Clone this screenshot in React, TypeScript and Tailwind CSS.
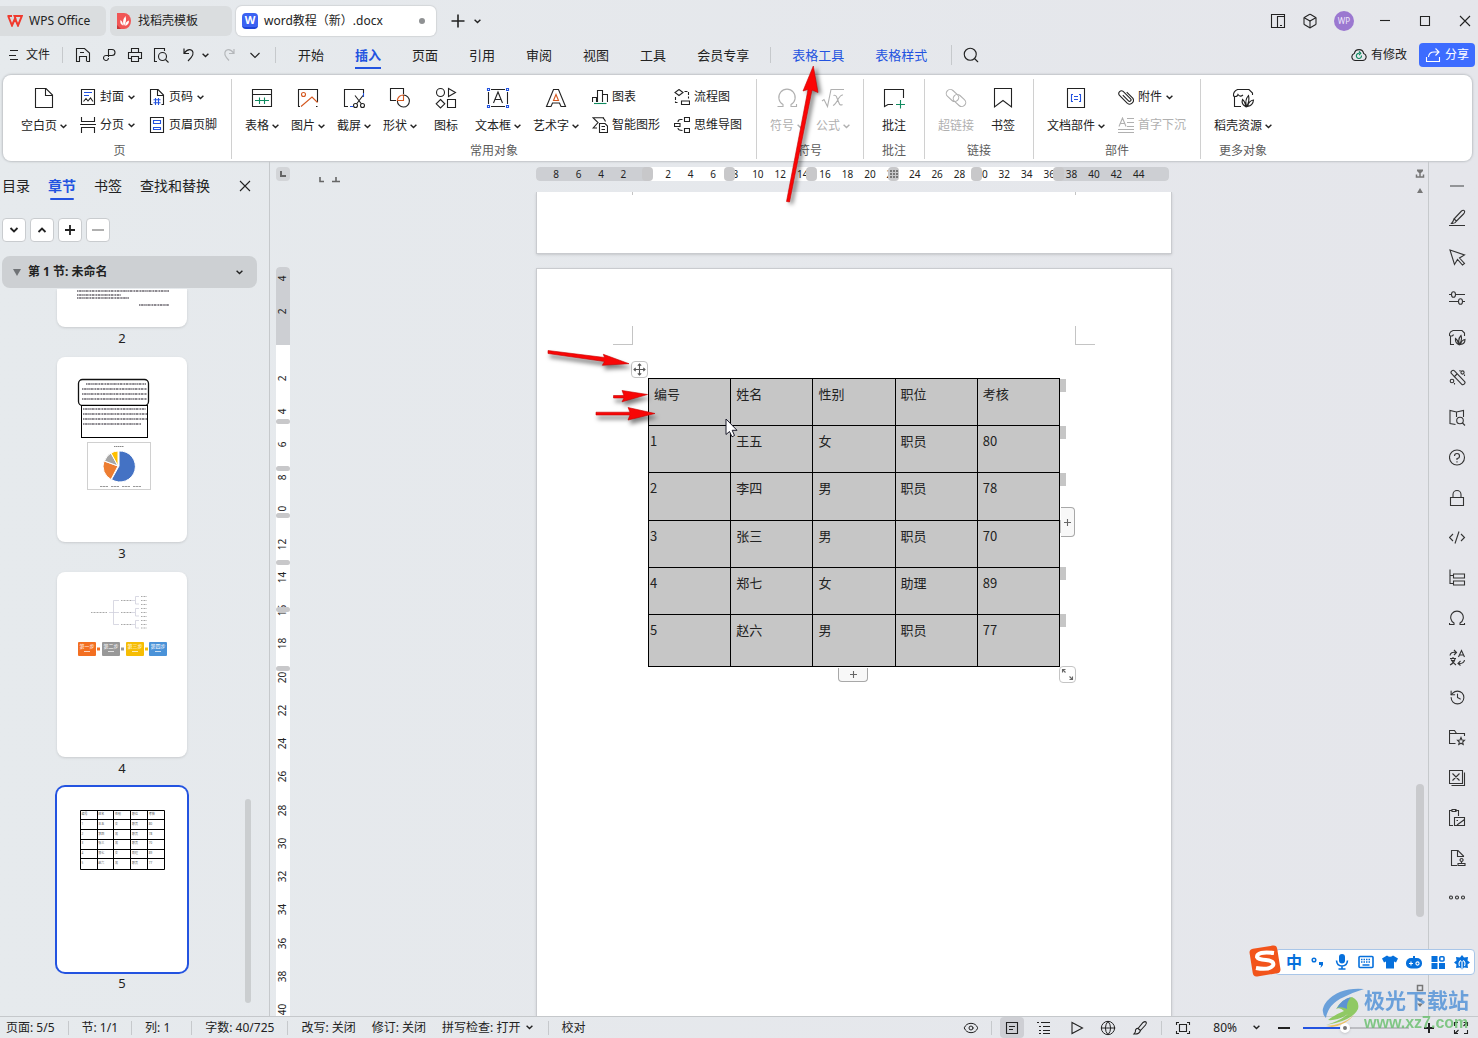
import { ReactNode } from "react";
import { Box, Eye, Globe, History, Search } from "lucide-react";

interface IconProps {
  size?: number;
  className?: string;
  children: ReactNode;
}

function Icon({ size = 16, className = "", children }: IconProps) {
  return (
    <svg
      width={size}
      height={size}
      viewBox={`0 0 ${size} ${size}`}
      fill="none"
      stroke="currentColor"
      strokeWidth={1.1}
      className={`shrink-0 ${className}`}
      aria-hidden="true"
    >
      {children}
    </svg>
  );
}

function Chevron({ className = "" }: { className?: string }) {
  return (
    <svg width="7" height="5" viewBox="0 0 7 5" fill="none" stroke="currentColor" strokeWidth="1.4" className={`shrink-0 ${className}`} aria-hidden="true">
      <path d="M0.6 0.8 3.5 3.6 6.4 0.8" />
    </svg>
  );
}

const BLUE = "#2353e0";
const ORANGE = "#d4571e";
const GREEN = "#0f8a5f";

/* ---------- ribbon icons ---------- */

const bigIcons: Record<string, ReactNode> = {
  blank: <path d="M3.5 2.5H14L20.5 9V21.5H3.5ZM13.5 2.5V9.5H20.5" />,
  table: (
    <>
      <path d="M2.5 3.5H21.5V20.5H2.5ZM2.5 8.5H21.5" />
      <path d="M5 14.5H19M9.5 11.5V18M14.5 11.5V18" stroke={GREEN} />
    </>
  ),
  picture: (
    <>
      <path d="M21.5 16V3.5H2.5V20.5H4M21.5 20.5H20" />
      <circle cx="7.5" cy="8.5" r="2" stroke={ORANGE} />
      <path d="M5 20.5 16 11 21.5 16.5" stroke={ORANGE} />
    </>
  ),
  capture: (
    <>
      <path d="M6 20.5H2.5V3.5H21.5V7" />
      <path d="M21.5 7V11M8 20.5H11" stroke={BLUE} />
      <path d="M13 9.5 19.5 18M21 9.5 14.5 18" />
      <circle cx="13.5" cy="19.5" r="2" />
      <circle cx="20.5" cy="19.5" r="2" />
    </>
  ),
  shape: (
    <>
      <path d="M8 14.5H2.5V2.5H15.5V8" />
      <path d="M9.3 14.5A6 6 0 0 1 15.5 9V14.5Z" stroke={ORANGE} />
      <path d="M15.5 9A6 6 0 1 1 9.4 15" />
    </>
  ),
  glyphs: (
    <>
      <circle cx="6.5" cy="6.5" r="4" />
      <path d="M14.5 2.5 21.5 6.5 14.5 10.5Z" />
      <path d="M6.5 13.5 10.8 17.8 6.5 22 2.2 17.8Z" />
      <path d="M13.5 13.5H21.5V21.5H13.5Z" />
    </>
  ),
  textbox: (
    <>
      <path d="M5 3.5H19M5 20.5H19M2.5 6V18M21.5 6V18M7.5 17 12 6 16.5 17M9 13.5H15" />
      <path d="M1.5 2.5H3.5V4.5H1.5ZM20.5 2.5H22.5V4.5H20.5ZM1.5 19.5H3.5V21.5H1.5ZM20.5 19.5H22.5V21.5H20.5Z" stroke={BLUE} />
    </>
  ),
  wordart: (
    <>
      <path d="M9.5 3.5H14.5L21.5 20.5H17L15.5 17H8.5L7 20.5H2.5Z" />
      <path d="M12 8.5 14.5 14.5H9.5Z" stroke={ORANGE} />
    </>
  ),
  omega: <path d="M2.5 20.5H8V18.5A8.2 8.2 0 1 1 16 18.5V20.5H21.5V18" />,
  formula: (
    <>
      <path d="M1 15 3 13.5 6.5 20.5 10 3.5H23" />
      <path d="M12.5 9.5Q15 8.5 16 12L18 17Q19 20 21.5 18.5M22 9Q20 8.5 17.5 12.5Q14.5 18.5 12 19.5" />
    </>
  ),
  comment: (
    <>
      <path d="M21.5 12V3.5H2.5V20.5L6 18.5H11" />
      <path d="M18.5 14V22.5M14 18.5H23" stroke={GREEN} />
    </>
  ),
  link: (
    <>
      <rect x="1.5" y="5.5" width="14" height="8" rx="4" transform="rotate(42 8.5 9.5)" />
      <rect x="8.5" y="10.5" width="14" height="8" rx="4" transform="rotate(42 15.5 14.5)" />
    </>
  ),
  bookmark: <path d="M3.5 21V2.5H20.5V21L12 14.5Z" />,
  parts: (
    <>
      <path d="M3.5 2.5H20.5V21.5H3.5Z" />
      <path d="M9 8.5H7.5V15.5H9M15 8.5H16.5V15.5H15M10 10.5H14M10 13.5H14" stroke={BLUE} />
    </>
  ),
  docer: (
    <>
      <path d="M6.5 3.5H18L21.5 7V9M6.5 3.5Q2 5.5 2.5 10Q6 11.5 7 8.5Q9 11.5 12 9M3.5 11V20.5H10" />
      <path d="M15.5 20.5Q13.5 14 17.5 9.5Q19 15 15.5 20.5ZM14.5 20.5Q10 18 11.5 13.5Q14.5 16 14.5 20.5ZM16.5 20.5Q18 14.5 22.5 14Q22 19.5 16.5 20.5Z" />
    </>
  ),
};

const smallIcons: Record<string, ReactNode> = {
  cover: (
    <>
      <path d="M1.5 0.5H14.5V15.5H1.5Z" />
      <path d="M4 3.5H12M4 6.5H9" stroke={BLUE} />
      <path d="M3.5 12.5 6 9.5 8 12 10.5 9 13 12.5" />
    </>
  ),
  pageBreak: <path d="M1.5 0V4.5H14.5V0M0 7.5H16M1.5 16V10.5H14.5V16" />,
  pageNumber: (
    <>
      <path d="M3.5 15.5H1.5V0.5H9L14.5 6V15.5H12.5M8.5 0.5V6.5H14.5" />
      <path d="M6.5 9V16M9.5 9V16M4.5 10.8H11.5M4.5 13.8H11.5" stroke={BLUE} />
    </>
  ),
  headerFooter: (
    <>
      <path d="M1.5 0.5H14.5V15.5H1.5Z" />
      <path d="M4.5 3.5H11.5V6.5H4.5ZM4.5 10.5H11.5V12.5H4.5Z" stroke={BLUE} />
    </>
  ),
  chart: (
    <>
      <path d="M0.5 13V8.5H4.5V13M5.5 13V1.5H10.5V13M10.5 5.5H15.5V13" />
      <path d="M2 14.5H14.5" stroke={GREEN} />
    </>
  ),
  smart: (
    <>
      <path d="M11.5 2V0.8H1.2L6 5.5 1.2 11H5M11 1Q12.5 2 13.5 4.5" />
      <path d="M7.5 6.5H13L15.5 9V15.5H7.5ZM9.5 9.5H13M9.5 12.5H13" />
    </>
  ),
  flow: (
    <>
      <path d="M5 0.5 9 3.5 5 6.5 1 3.5ZM7.5 12H15.5V15.5H7.5Z" />
      <path d="M10.5 2.5H14.5V9.5M1.5 8V13.5H5" strokeDasharray="3 1.5" />
    </>
  ),
  mind: (
    <>
      <path d="M0.5 6.5H6V9.5H0.5ZM10.5 0.5H15.5V4.5H10.5ZM10.5 11.5H15.5V15.5H10.5Z" />
      <path d="M8.5 2.5H6.5Q4 2.5 4 5M4 11Q4 13.5 8.5 13.5" />
    </>
  ),
  clip: (
    <path d="M4.5 9H12.5A1.4 1.4 0 0 0 12.500 6H2A2.800 2.800 0 0 0 2 11.500H13.500A3.800 3.800 0 0 0 13.500 4H5" transform="rotate(45 8 8)" />
  ),
  dropCap: <path d="M1 9.5 4.5 1 8 9.5M2.5 6.5H6.5M9 1.5H16M9 5.5H16M9 9.5H16M0 12.5H16M0 15.5H16" />,
};

interface RibbonButtonProps {
  icon: string;
  label: string;
  width: string;
  menu?: boolean;
  disabled?: boolean;
}

function BigButton({ icon, label, width, menu, disabled }: RibbonButtonProps) {
  return (
    <button type="button" disabled={disabled} className={`flex flex-col items-center gap-2 pt-[7px] ${width} ${disabled ? "text-[#b0b0b0]" : "text-[#222]"}`}>
      <Icon size={24}>{bigIcons[icon]}</Icon>
      <span className="flex items-center gap-[3px] whitespace-nowrap leading-4">
        {label}
        {menu && <Chevron />}
      </span>
    </button>
  );
}

function SmallButton({ icon, label, menu, disabled }: Omit<RibbonButtonProps, "width">) {
  return (
    <button type="button" disabled={disabled} className={`flex items-center gap-1 whitespace-nowrap leading-4 ${disabled ? "text-[#b0b0b0]" : "text-[#222]"}`}>
      <Icon>{smallIcons[icon]}</Icon>
      {label}
      {menu && <Chevron />}
    </button>
  );
}

function SmallColumn({ children }: { children: ReactNode }) {
  return <div className="mx-[7px] flex flex-col items-start gap-3 pt-[10px]">{children}</div>;
}

function RibbonGroup({ caption, children }: { caption: string; children: ReactNode }) {
  return (
    <div className="flex flex-col items-center justify-between border-l border-[#d0d0d0] px-[7px] first:border-l-0">
      <div className="flex">{children}</div>
      <span className="leading-4 text-[#5c5c5c]">{caption}</span>
    </div>
  );
}

function Ribbon() {
  return (
    <div className="ml-[3px] mr-[6px] flex h-[86px] shrink-0 rounded-lg bg-white pb-[2px] pl-[5px] pt-1 text-xs shadow-[0_0_2px_1px_#bfc3c7]">
      <RibbonGroup caption="页">
        <BigButton icon="blank" label="空白页" width="w-[58px]" menu />
        <SmallColumn>
          <SmallButton icon="cover" label="封面" menu />
          <SmallButton icon="pageBreak" label="分页" menu />
        </SmallColumn>
        <SmallColumn>
          <SmallButton icon="pageNumber" label="页码" menu />
          <SmallButton icon="headerFooter" label="页眉页脚" />
        </SmallColumn>
      </RibbonGroup>
      <RibbonGroup caption="常用对象">
        <BigButton icon="table" label="表格" width="w-[46px]" menu />
        <BigButton icon="picture" label="图片" width="w-[46px]" menu />
        <BigButton icon="capture" label="截屏" width="w-[46px]" menu />
        <BigButton icon="shape" label="形状" width="w-[46px]" menu />
        <BigButton icon="glyphs" label="图标" width="w-[46px]" />
        <BigButton icon="textbox" label="文本框" width="w-[58px]" menu />
        <BigButton icon="wordart" label="艺术字" width="w-[58px]" menu />
        <SmallColumn>
          <SmallButton icon="chart" label="图表" />
          <SmallButton icon="smart" label="智能图形" />
        </SmallColumn>
        <SmallColumn>
          <SmallButton icon="flow" label="流程图" />
          <SmallButton icon="mind" label="思维导图" />
        </SmallColumn>
      </RibbonGroup>
      <RibbonGroup caption="符号">
        <BigButton icon="omega" label="符号" width="w-[46px]" menu disabled />
        <BigButton icon="formula" label="公式" width="w-[46px]" menu disabled />
      </RibbonGroup>
      <RibbonGroup caption="批注">
        <BigButton icon="comment" label="批注" width="w-[46px]" />
      </RibbonGroup>
      <RibbonGroup caption="链接">
        <BigButton icon="link" label="超链接" width="w-[48px]" disabled />
        <BigButton icon="bookmark" label="书签" width="w-[46px]" />
      </RibbonGroup>
      <RibbonGroup caption="部件">
        <BigButton icon="parts" label="文档部件" width="w-[70px]" menu />
        <SmallColumn>
          <SmallButton icon="clip" label="附件" menu />
          <SmallButton icon="dropCap" label="首字下沉" disabled />
        </SmallColumn>
      </RibbonGroup>
      <RibbonGroup caption="更多对象">
        <BigButton icon="docer" label="稻壳资源" width="w-[70px]" menu />
      </RibbonGroup>
    </div>
  );
}

/* ---------- title bar and menu ---------- */

function TitleBar() {
  return (
    <header className="flex h-10 shrink-0 items-center pt-[2px] text-xs">
      <button type="button" className="flex h-[30px] w-[106px] items-center gap-[6px] rounded-r-md bg-[#dadddf] pl-[7px]">
        <svg width="16" height="12" viewBox="0 0 16 12" fill="none" stroke="#f03a2e" strokeWidth="2" aria-hidden="true">
          <path d="M0.5 1H5M1.2 1 5 10.5 8 3.5 11 10.5 14.8 1H7.5L9 5" />
        </svg>
        WPS Office
      </button>
      <button type="button" className="ml-1 flex h-[30px] w-[122px] items-center gap-[7px] rounded-md bg-[#dadddf] pl-[7px]">
        <svg width="14" height="16" viewBox="0 0 14 16" aria-hidden="true">
          <path d="M0 0H7A7 8 0 0 1 7 16H0Z" fill="#f15656" />
          <path d="M0 12 4 16H0Z" fill="#c93636" />
          <path d="M7 13Q4.5 8 8.5 3Q10 8 7 13ZM6 12.5Q2.5 11 3.5 7Q6 8.5 6 12.5ZM8 12.8Q8.5 8.5 12 7.5Q12 12 8 12.8Z" fill="#fff" />
        </svg>
        找稻壳模板
      </button>
      <button type="button" className="ml-1 flex h-[30px] w-[200px] items-center gap-[6px] rounded-md bg-white pl-[6px] pr-[11px] shadow-[0_0_1px_1px_#d3d6d9]">
        <span className="flex h-4 w-4 items-center justify-center rounded-sm border-b-2 border-[#1f45d8] bg-[#3b62f2] text-[11px] font-bold leading-3 text-white">W</span>
        <span>word教程（新）.docx</span>
        <span className="ml-auto h-[6px] w-[6px] rounded-full bg-[#8f9193]" />
      </button>
      <button type="button" aria-label="新建" className="ml-[14px] flex items-center">
        <Icon size={16}>
          <path d="M8 1.5V14.5M1.5 8H14.5" strokeWidth="1.6" />
        </Icon>
      </button>
      <button type="button" aria-label="标签列表" className="ml-2">
        <Chevron />
      </button>
      <div className="ml-auto flex items-center gap-4 pr-[7px]">
        <button type="button" aria-label="窗口">
          <Icon>
            <path d="M7 14.5H1.5V1.5H14.5V3M7.5 3.5H14.5V14.5H7.5ZM10 12.5H12" />
          </Icon>
        </button>
        <button type="button" aria-label="应用">
          <Box size={16} strokeWidth={1.6} />
        </button>
        <span className="flex h-5 w-5 items-center justify-center rounded-full bg-[#9b78d0] text-[8px] leading-none text-[#efe8fa]">WP</span>
        <div className="ml-[9px] flex items-center gap-7">
          <button type="button" aria-label="最小化">
            <Icon size={12}>
              <path d="M1 5.5H11" />
            </Icon>
          </button>
          <button type="button" aria-label="最大化">
            <Icon size={12}>
              <path d="M1.5 1.5H10.5V10.5H1.5Z" />
            </Icon>
          </button>
          <button type="button" aria-label="关闭">
            <Icon size={12}>
              <path d="M1 1 11 11M11 1 1 11" />
            </Icon>
          </button>
        </div>
      </div>
    </header>
  );
}

const menuTabs = ["开始", "插入", "页面", "引用", "审阅", "视图", "工具", "会员专享"];

function MenuBar() {
  return (
    <nav className="flex h-[35px] shrink-0 items-center pb-[5px] text-xs">
      <button type="button" className="flex items-center gap-[7px] pl-[9px]">
        <Icon size={10}>
          <path d="M1 0.5H9M0 5.5H7M1 9.5H9" />
        </Icon>
        文件
      </button>
      <span className="ml-3 h-4 w-px bg-[#c6c9cc]" />
      <div className="ml-3 flex items-center gap-[10px]">
        <button type="button" aria-label="保存">
          <Icon>
            <path d="M5 14.5H1.5V1.5H9.5L14.5 6V14.5H12M4.5 14.5V9.5H11.5V14.5M5 5.5H9" />
          </Icon>
        </button>
        <button type="button" aria-label="输出">
          <Icon>
            <path d="M7.5 10V2.500H11A2.800 2.800 0 0 1 11 8.500H5.500A2.500 2.500 0 1 0 7.500 11" />
          </Icon>
        </button>
        <button type="button" aria-label="打印">
          <Icon>
            <path d="M4.5 5V1.5H11.5V5M4 11.5H1.5V5.5H14.5V11.5H12M4.5 9.5H11.5V14.5H4.5Z" />
          </Icon>
        </button>
        <button type="button" aria-label="打印预览">
          <Icon>
            <path d="M4 14.5H1.5V1.5H11.5V4" />
            <circle cx="9.5" cy="9.5" r="4" />
            <path d="M12.5 12.5 15.5 15.5" />
          </Icon>
        </button>
        <button type="button" aria-label="撤销" className="flex items-center gap-[5px] pl-[2px]">
          <Icon>
            <path d="M3 1.5V6.5H8M3 6.5Q7 1 11 3.5Q14.5 7 7 14" strokeWidth="1.2" />
          </Icon>
          <Chevron />
        </button>
        <button type="button" aria-label="恢复" disabled className="pl-[2px] text-[#b5b8bb]">
          <Icon>
            <path d="M13 2V6.5H8M13 6.5Q9 1 5 3.5Q1.5 7 8 13.5" strokeWidth="1.2" />
          </Icon>
        </button>
        <button type="button" aria-label="更多命令">
          <Icon>
            <path d="M3.5 6 8 10.5 12.5 6" />
          </Icon>
        </button>
      </div>
      <span className="ml-3 h-4 w-px bg-[#c6c9cc]" />
      <div className="ml-[22px] flex items-center gap-[31px] text-[13px] leading-5">
        {menuTabs.map((tab) => (
          <a key={tab} href="#" className={tab === "插入" ? "relative font-bold text-[#2353e0] after:absolute after:-bottom-1 after:left-0 after:h-[2px] after:w-full after:bg-[#2353e0]" : ""}>
            {tab}
          </a>
        ))}
      </div>
      <span className="ml-[21px] h-4 w-px bg-[#c6c9cc]" />
      <div className="ml-[21px] flex items-center gap-[31px] text-[13px] leading-5 text-[#2353e0]">
        <a href="#">表格工具</a>
        <a href="#">表格样式</a>
      </div>
      <span className="ml-6 h-5 w-px bg-[#c6c9cc]" />
      <button type="button" aria-label="搜索" className="ml-[10px]">
        <Search size={18} strokeWidth={1.5} />
      </button>
      <div className="ml-auto flex items-center pr-[3px]">
        <button type="button" className="flex items-center gap-1">
          <Icon>
            <path d="M4.5 13.5A3.6 3.6 0 0 1 3.3 6.5A4.8 4.8 0 0 1 12.7 6.5A3.6 3.6 0 0 1 11.5 13.5Z" />
            <path d="M10.5 8.5A2.6 2.6 0 1 1 8.5 6.3M8 4.5 9.8 6.3 8 8" stroke={GREEN} />
          </Icon>
          有修改
        </button>
        <button type="button" className="ml-3 flex h-6 w-14 items-center justify-center gap-1 rounded bg-[#3d6cff] text-white">
          <Icon>
            <path d="M10.5 1.5 14 5 10.5 8.5M14 5H9Q4 5 3.5 10M1.5 10V14.5H14.5V10" />
          </Icon>
          分享
        </button>
      </div>
    </nav>
  );
}

/* ---------- section pane ---------- */

function TextLines({ x, y, widths, gap }: { x: number; y: number; widths: number[]; gap: number }) {
  return (
    <g stroke="#8d8a90" strokeWidth="1.8" strokeDasharray="1.5 0.6 2.5 0.5 0.8 0.4">
      {widths.map((w, i) => (
        <path key={i} d={`M${x} ${y + i * gap}h${w}`} />
      ))}
    </g>
  );
}

function PageTwoThumb() {
  return (
    <svg width="130" height="38" viewBox="0 0 130 38" aria-hidden="true">
      <TextLines x={20} y={2} widths={[92]} gap={4} />
      <TextLines x={20} y={6} widths={[44]} gap={4} />
      <TextLines x={20} y={9} widths={[52]} gap={4} />
      <TextLines x={82} y={16} widths={[30]} gap={4} />
    </svg>
  );
}

function PageThreeThumb() {
  return (
    <svg width="130" height="185" viewBox="0 0 130 185" aria-hidden="true">
      <rect x="21.5" y="22.5" width="70" height="26" rx="4" fill="none" stroke="#111" strokeWidth="1.3" />
      <TextLines x={29} y={27} widths={[60]} gap={5} />
      <TextLines x={25} y={32} widths={[65, 65, 65]} gap={5} />
      <rect x="24.5" y="48.5" width="66" height="32" fill="#fff" stroke="#000" />
      <TextLines x={26} y={52} widths={[63, 64, 64, 58]} gap={5} />
      <rect x="30.5" y="85.5" width="63" height="47" fill="#fff" stroke="#d0d0d0" />
      <path d="M57 89.5H67" stroke="#888" strokeDasharray="1.5 0.5" />
      <g stroke="#fff" strokeWidth="1">
        <path d="M62 109V94A15.5 15.5 0 1 1 54.5 122.5Z" fill="#4472c4" />
        <path d="M61 109 54 122.5A15 15 0 0 1 47 104Z" fill="#ed7d31" />
        <path d="M61 109 47.5 104A15 15 0 0 1 54 96Z" fill="#a5a5a5" />
        <path d="M61 109 54 96A15 15 0 0 1 61 94Z" fill="#ffc000" />
      </g>
      <path d="M43 129.5H84" stroke="#999" strokeDasharray="2 0.5 3 0.5 2 3" />
    </svg>
  );
}

const steps = [
  { x: 21, label: "第一步", fill: "#f36f21" },
  { x: 45, label: "第二步", fill: "#989898" },
  { x: 69, label: "第三步", fill: "#f6bd04" },
  { x: 92, label: "第四步", fill: "#4a92d8" },
];

function PageFourThumb() {
  return (
    <svg width="130" height="185" viewBox="0 0 130 185" aria-hidden="true">
      <g fill="none" stroke="#cfcfdc" strokeWidth="0.8">
        <path d="M52 40.5H62M62 28.5H56.5V52.5H62M74 28.5H78M74 40.5H78M74 52.5H78" />
        <path d="M82 24.5H78.5V32H82M82 36.5H78.5V44H82M82 48.5H78.5V56H82" />
      </g>
      <g stroke="#a8a8a8" strokeWidth="1.2" strokeDasharray="1 0.5">
        <path d="M34 40.5H50M64 28.5H74M64 40.5H74M64 52.5H74" />
        {[24.5, 28.5, 32.5, 36.5, 40.5, 44.5, 48.5, 52.5, 56].map((y) => (
          <path key={y} d={`M84 ${y}H90`} />
        ))}
      </g>
      <path d="M40 77H43" stroke="#f36f21" strokeWidth="3" />
      <path d="M64 77H67" stroke="#989898" strokeWidth="3" />
      <path d="M88 77H91" stroke="#f6bd04" strokeWidth="3" />
      {steps.map((s) => (
        <g key={s.label}>
          <rect x={s.x} y="70" width="18" height="14" rx="1" fill={s.fill} />
          <text x={s.x + 9} y="76" textAnchor="middle" fontSize="5" fill="#fff">
            {s.label}
          </text>
          <path d={`M${s.x + 6} 79.5h6`} stroke="#fff" strokeOpacity="0.7" />
        </g>
      ))}
    </svg>
  );
}

const rows = [
  ["编号", "姓名", "性别", "职位", "考核"],
  ["1", "王五", "女", "职员", "80"],
  ["2", "李四", "男", "职员", "78"],
  ["3", "张三", "男", "职员", "70"],
  ["4", "郑七", "女", "助理", "89"],
  ["5", "赵六", "男", "职员", "77"],
];

function PageFiveThumb() {
  return (
    <svg width="130" height="185" viewBox="0 0 130 185" aria-hidden="true">
      <path
        d="M23.5 23.5H107.5V82.5H23.5ZM40.5 23.5V82.5M56.5 23.5V82.5M73.5 23.5V82.5M90.5 23.5V82.5M23.5 32.5H107.5M23.5 42.5H107.5M23.5 52.5H107.5M23.5 62.5H107.5M23.5 71.5H107.5"
        fill="none"
        stroke="#000"
      />
      {rows.map((row, r) =>
        row.map((cell, c) => (
          <text key={`${r}-${c}`} x={24.5 + c * 16.8} y={28 + r * 9.8} fontSize="3" fill="#555">
            {cell}
          </text>
        )),
      )}
    </svg>
  );
}

const paneTabs = ["目录", "章节", "书签", "查找和替换"];

const paneButtons = [
  { label: "下一节", path: "M3.5 5 7 8.5 10.5 5", off: false },
  { label: "上一节", path: "M3.5 9 7 5.5 10.5 9", off: false },
  { label: "增加", path: "M7 2V12M2 7H12", off: false },
  { label: "删除", path: "M1 7H13", off: true },
];

const thumbs = [
  { page: 3, art: <PageThreeThumb /> },
  { page: 4, art: <PageFourThumb /> },
  { page: 5, art: <PageFiveThumb /> },
];

function SectionPane() {
  return (
    <aside className="flex w-[270px] shrink-0 flex-col overflow-hidden border-r border-[#c6c9cc]">
      <div className="mt-[15px] flex items-center gap-[18px] pl-[2px] text-sm leading-5">
        {paneTabs.map((tab) => (
          <a key={tab} href="#" className={tab === "章节" ? "relative font-bold text-[#2353e0] after:absolute after:-bottom-1 after:left-[2px] after:h-[2px] after:w-6 after:rounded after:bg-[#2353e0]" : ""}>
            {tab}
          </a>
        ))}
        <button type="button" aria-label="关闭窗格" className="ml-auto mr-[18px]">
          <Icon size={12}>
            <path d="M1 1 11 11M11 1 1 11" />
          </Icon>
        </button>
      </div>
      <div className="mt-[22px] flex gap-1 pl-[2px]">
        {paneButtons.map((b) => (
          <button key={b.label} type="button" aria-label={b.label} disabled={b.off} className={`flex h-6 w-6 items-center justify-center rounded border border-[#c9cccf] bg-white ${b.off ? "text-[#a8a8a8]" : "text-[#222]"}`}>
            <Icon size={14}>
              <path d={b.path} strokeWidth="1.8" />
            </Icon>
          </button>
        ))}
      </div>
      <button type="button" className="ml-[2px] mr-3 mt-[14px] flex h-8 shrink-0 items-center rounded-lg bg-[#cdd0d3] pl-[11px] pr-[14px] text-xs font-bold">
        <svg width="8" height="7" viewBox="0 0 8 7" className="mr-[7px]" aria-hidden="true">
          <path d="M0 0H8L4 7Z" fill="#707376" />
        </svg>
        第 1 节: 未命名
        <Chevron className="ml-auto" />
      </button>
      <div className="flex min-h-0 flex-1 pt-px">
        <div className="flex w-[244px] flex-col items-center overflow-hidden text-[13px] leading-[22px]">
          <div className="h-[38px] w-[130px] shrink-0 rounded-b-lg bg-white shadow">
            <PageTwoThumb />
          </div>
          <span className="mb-2">2</span>
          {thumbs.map((t) => (
            <div key={t.page} className="mb-2 flex flex-col items-center">
              <div className={`h-[185px] w-[130px] rounded-lg bg-white ${t.page === 5 ? "ring-2 ring-[#2353e0]" : "shadow"}`}>{t.art}</div>
              <span>{t.page}</span>
            </div>
          ))}
        </div>
        <div className="ml-px flex w-[6px] flex-col justify-end pb-[13px]">
          <div className="h-[204px] rounded-full bg-[#cbced0]" />
        </div>
      </div>
    </aside>
  );
}

/* ---------- rulers ---------- */

const hMarks = [8, 6, 4, 2, 0, 2, 4, 6, 8, 10, 12, 14, 16, 18, 20, 22, 24, 26, 28, 30, 32, 34, 36, 38, 40, 42, 44];
const hStops = ["left-[106px]", "left-[188px]", "left-[270px]", "left-[352px]", "left-[435px]", "left-[517px]"];
const vMarks = [2, 0, 2, 4, 6, 8, 10, 12, 14, 16, 18, 20, 22, 24, 26, 28, 30, 32, 34, 36, 38, 40];
const vStops = ["top-[152px]", "top-[199px]", "top-[246px]", "top-[293px]", "top-[340px]", "top-[399px]"];

function HorizontalRuler() {
  return (
    <div className="w-[636px] pr-[3px]">
      <div className="relative h-[14px] rounded bg-white">
        <span className="absolute left-0 top-0 h-full w-[112px] rounded-l bg-[#cdcfd3]" />
        <span className="absolute right-0 top-0 h-full w-[110px] rounded-r bg-[#cdcfd3]" />
        <div className="relative flex pl-[9px] pr-[19px] text-[10px] leading-[14px]">
          {hMarks.map((m, i) => (
            <span key={i} className="w-0 flex-1 text-center">
              {m === 0 ? "" : m}
            </span>
          ))}
        </div>
        {hStops.map((pos, i) => (
          <span key={pos} className={`absolute top-0 flex h-[14px] w-[11px] items-center justify-center rounded bg-[#c8c8ca] ${pos}`}>
            {i === 3 && (
              <svg width="8" height="8" viewBox="0 0 8 8" aria-hidden="true">
                <path d="M0 1H8M0 4H8M0 7H8" stroke="#777" strokeWidth="2" strokeDasharray="2 1" />
              </svg>
            )}
          </span>
        ))}
      </div>
    </div>
  );
}

function VerticalRuler() {
  return (
    <div className="relative mt-[75px] min-h-0 w-[14px] flex-1 overflow-hidden rounded-t bg-white text-[10px]">
      <span className="absolute inset-x-0 top-0 h-[78px] bg-[#cdcfd3]" />
      <div className="relative flex h-7 items-center justify-center pb-[6px]">
        <span className="-rotate-90">4</span>
      </div>
      <div className="relative flex h-[731px] flex-col">
        {vMarks.map((m, i) => (
          <span key={i} className="flex h-0 flex-1 items-center justify-center">
            <span className="-rotate-90">{m === 0 ? "" : m}</span>
          </span>
        ))}
      </div>
      {vStops.map((pos) => (
        <span key={pos} className={`absolute left-0 h-[5px] w-[14px] rounded-full bg-[#c8c8ca] ${pos}`} />
      ))}
    </div>
  );
}

/* ---------- document ---------- */

const rowHeights = ["h-[47px]", "h-[47px]", "h-[48px]", "h-[47px]", "h-[47px]", "h-[52px]"];
const rowEnds = ["top-[1px]", "top-[48px]", "top-[95px]", "top-[142px]", "top-[189px]", "top-[236px]"];

function StaffTable() {
  return (
    <div className="relative w-[412px]">
      <table className="w-full table-fixed border-collapse bg-[#c6c6c6] font-['Noto_Sans_CJK_SC',sans-serif] text-[13px] leading-[18px] text-[#222]">
        <tbody>
          {rows.map((row, r) => (
            <tr key={row[0]} className={rowHeights[r]}>
              {row.map((cell, c) => {
                const pad = r > 0 && c === 0 ? "pl-[1px]" : "pl-[5px]";
                return (
                  <td key={c} className={`border border-black pt-[6px] align-top ${pad}`}>
                    {cell}
                  </td>
                );
              })}
            </tr>
          ))}
        </tbody>
      </table>
      {rowEnds.map((pos) => (
        <span key={pos} className={`absolute left-[412px] h-[13px] w-[6px] bg-[#c6c6c6] ${pos}`} />
      ))}
      <button type="button" aria-label="移动表格" className="absolute -left-[17px] -top-[17px] flex h-[17px] w-[17px] items-center justify-center rounded-sm border border-[#c4c4c4] bg-white text-[#555]">
        <Icon size={13}>
          <path d="M6.5 1V12M1 6.5H12M4.8 2.7 6.5 1 8.2 2.7M4.8 10.3 6.5 12 8.2 10.3M2.7 4.8 1 6.5 2.7 8.2M10.3 4.8 12 6.5 10.3 8.2" />
        </Icon>
      </button>
      <button type="button" aria-label="添加列" className="absolute left-[413px] top-[129px] flex h-[30px] w-[14px] items-center justify-center rounded-r-sm border border-l-0 border-[#a8a8a8] bg-[#f8f8f8] text-[#666]">
        <Icon size={9}>
          <path d="M4.5 1V8M1 4.5H8" />
        </Icon>
      </button>
      <button type="button" aria-label="添加行" className="absolute left-[190px] top-[290px] flex h-[14px] w-[30px] items-center justify-center rounded-b-sm border border-t-0 border-[#a8a8a8] bg-[#f8f8f8] text-[#666]">
        <Icon size={9}>
          <path d="M4.5 1V8M1 4.5H8" />
        </Icon>
      </button>
      <button type="button" aria-label="调整大小" className="absolute left-[411px] top-[288px] flex h-[17px] w-[17px] items-center justify-center rounded-sm border border-[#c4c4c4] bg-white text-[#666]">
        <Icon size={13}>
          <path d="M1.5 4.5V1.5H4.5M1.5 1.5 4.5 4.5M11.5 8.5V11.5H8.5M11.5 11.5 8.5 8.5" />
        </Icon>
      </button>
      <svg width="14" height="20" viewBox="0 0 14 20" className="absolute left-[77px] top-[40px]" aria-hidden="true">
        <path d="M1 1V16.5L4.5 13.5 7 18.8 9.5 17.5 7.2 12.3H12Z" fill="#fff" stroke="#1a1a2a" />
      </svg>
    </div>
  );
}

function DocumentArea() {
  return (
    <main className="flex min-w-0 flex-1 flex-col">
      <div className="flex h-[31px] shrink-0 items-start pt-[6px]">
        <div className="w-[26px] pl-[6px]">
          <button type="button" aria-label="制表符" className="flex h-[14px] w-[14px] items-center justify-center rounded-sm bg-[#d3d5d8] text-[#666]">
            <Icon size={8}>
              <path d="M2 1V6H7" strokeWidth="2" />
            </Icon>
          </button>
        </div>
        <div className="relative flex flex-1 justify-center">
          <svg width="22" height="6" viewBox="0 0 22 6" className="absolute left-[22px] top-[10px]" fill="none" stroke="#666" strokeWidth="1.6" aria-hidden="true">
            <path d="M2 0V4.5H6M14 4.5H22M18 0V4.5" />
          </svg>
          <HorizontalRuler />
        </div>
        <div className="flex w-4 justify-center text-[#777]">
          <Icon size={10} className="mt-[2px]">
            <path d="M2 0.500H8V2L6 4H4L2 2Z" fill="currentColor" stroke="none" />
            <path d="M1.500 5.500V8H8.500V5.500M5 4V8" strokeWidth="1.500" />
          </Icon>
        </div>
      </div>
      <div className="flex min-h-0 flex-1">
        <div className="flex w-[26px] flex-col pl-[6px]">
          <VerticalRuler />
        </div>
        <div className="flex min-w-0 flex-1 flex-col items-center overflow-hidden">
          <div className="flex h-[62px] w-[636px] shrink-0 justify-between border border-t-0 border-[#c9cbcf] bg-white px-[95px] shadow-sm">
            <span className="h-[3px] w-px bg-[#c4c4c4]" />
            <span className="h-[3px] w-px bg-[#c4c4c4]" />
          </div>
          <div className="relative mt-[14px] w-[636px] flex-1 border border-b-0 border-[#c9cbcf] bg-white shadow-sm">
            <div className="mt-[57px] flex justify-between px-[76px]">
              <span className="h-[19px] w-5 border-b border-r border-[#c4c4c4]" />
              <span className="h-[19px] w-5 border-b border-l border-[#c4c4c4]" />
            </div>
            <div className="ml-[111px] mt-[33px]">
              <StaffTable />
            </div>
            <svg width="124" height="90" viewBox="540 345 124 90" className="absolute left-[3px] top-[76px] drop-shadow-[2px_4px_2px_rgba(0,0,0,0.5)]" aria-hidden="true">
              <g fill="#f80606" stroke="#c80000" strokeWidth="0.6">
                <path d="M548 350.5 604.5 357.5 603.3 354.3 629 363.7 602.3 365.3 604.5 361.5 548 353.5Z" />
                <path d="M613.5 395.5H624L622 390.5 647.5 394.5 622 401.8 624 398H613.5Z" />
                <path d="M596 412.2H630L628 407.5 655 413.5 628 420 630 415H596Z" />
              </g>
            </svg>
          </div>
        </div>
        <div className="flex w-4 flex-col items-center text-[#777]">
          <svg width="6" height="5" viewBox="0 0 6 5" className="-mt-1" aria-hidden="true">
            <path d="M3 0 6 5H0Z" fill="#777" />
          </svg>
          <div className="mt-auto h-[133px] w-2 rounded-full bg-[#c9cacd]" />
          <Icon size={10} className="mt-[66px]">
            <path d="M2.5 2.5H7.5V7.5H2.5Z" strokeWidth="1.5" />
          </Icon>
          <Icon size={10} className="mb-2 mt-[5px]">
            <path d="M2 0.5H8L5 4ZM2 5.5H8L5 9Z" fill="currentColor" stroke="none" />
          </Icon>
        </div>
      </div>
    </main>
  );
}

/* ---------- side tools ---------- */

const sideTools: { label: string; art: ReactNode }[] = [
  { label: "样式", art: <path d="M5 10 12.5 2Q14.5 0.5 15.5 2Q16 3.5 14.5 5L7.5 12M5 10 7.5 12Q6 15 2.5 14.5Q4 13 5 10ZM0 16.5H16" /> },
  { label: "选择", art: <path d="M1 1 15.5 6 10.5 9 15.5 14.5 13.5 16 8.5 10.5 5.5 15.5Z" /> },
  {
    label: "属性",
    art: (
      <>
        <path d="M0 5.5H2.5M6.5 5.5H16M0 12.5H9.5M13.5 12.5H16" />
        <ellipse cx="4.5" cy="5.5" rx="2" ry="2.8" />
        <ellipse cx="11.5" cy="12.5" rx="2" ry="2.8" />
      </>
    ),
  },
  {
    label: "稻壳",
    art: <path d="M4 1.5H13L15.5 4V7M4 1.5Q0 3 0.5 6.5Q3.5 8 4.5 5.5M1.5 7.5V15.5H5M10.5 15.5Q8.5 10 12 6.5Q13.5 11 10.5 15.5ZM9.5 15.5Q6 14 6.5 9.5Q9.5 11.5 9.5 15.5ZM11.5 15.5Q12.5 11 16 10.5Q16 15 11.5 15.5Z" />,
  },
  {
    label: "工具箱",
    art: (
      <>
        <rect x="0" y="6.5" width="18" height="4" rx="1.8" transform="rotate(46 9 8.5)" />
        <circle cx="13.5" cy="3.5" r="1.6" />
        <circle cx="3" cy="12" r="1.8" />
        <path d="M11 1V2.500M15.500 5.500V7M5.500 14V15.500M8 5 5 8" />
      </>
    ),
  },
  {
    label: "查找",
    art: (
      <>
        <path d="M6.5 15.5 1 14.5V1.5L7.5 3 14.5 1.5V8M7.5 3V8" />
        <circle cx="11" cy="11.5" r="3.3" />
        <path d="M13.5 14 16 16.5" />
      </>
    ),
  },
  {
    label: "帮助",
    art: (
      <>
        <circle cx="8" cy="8.5" r="7.5" />
        <path d="M5.5 7A2.5 2.5 0 1 1 8 9.5V11M8 12.2V13.5" />
      </>
    ),
  },
  { label: "保护", art: <path d="M1.5 8.5H14.5V16.5H1.5ZM4 8.5V5.5A4 4 0 0 1 12 5.5V8.5" /> },
  { label: "代码", art: <path d="M4 5 0.5 8.5 4 12M12 5 15.5 8.5 12 12M10 2.5 6 14.5" /> },
  { label: "导航", art: <path d="M1 0.500V14.500H4M1 6.500H4M4.500 5H15.500V9H4.500ZM4.500 12H15.500V16H4.500Z" /> },
  { label: "符号", art: <path d="M0.500 14V15.500H5V14A6.300 6.300 0 1 1 11 14V15.500H15.500V14" /> },
  { label: "翻译", art: <path d="M1 6.5Q1.5 2.5 7 3.5M5 1 7.5 3.5 5 6M9.5 8 12.5 1.5 15.5 8M10.5 6H14.5M1 9.5H7M4 8V9.5M2 11.5H6M6 10Q5 14 1 16M2 10.5Q4 14 7 16M15.5 11Q15 15 9 14.5M11.5 12 9 14.5 11.5 16.5" /> },
  { label: "历史", art: null },
  { label: "素材", art: <path d="M6.5 14.5H0.5V1.5H5.5L7.5 4.5H15.5V7M0.5 1.5V4.5H7.5M12 8.5 13 11 15.5 11.2 13.7 13 14.2 15.5 12 14.2 9.8 15.5 10.3 13 8.5 11.2 11 11Z" /> },
  { label: "对比", art: <path d="M0.5 1.5H13.5V14.5H0.5ZM15.5 3.5V16.5H2.5M3.5 4.5 10.5 11.5M10.5 4.5 3.5 11.5" /> },
  { label: "图片", art: <path d="M4 16.500H0.500V1.500H3M6 1.500H9.500V7M3 0.500H7V2.500H3ZM5.500 8.500H15.500V16.500H5.500ZM8 16 15.500 10.500M7.500 11.500H9" /> },
  { label: "简历", art: <path d="M8 16.500H2.500V1.500H9L14.500 7V8M8.500 1.500V7.500H14M9 16.500H16V14.500H9ZM12.500 9.500A1.500 1.500 0 1 0 12.600 9.500M12.500 12.500V14.500" /> },
  {
    label: "更多",
    art: (
      <>
        <circle cx="2" cy="8.5" r="1.5" />
        <circle cx="8" cy="8.5" r="1.5" />
        <circle cx="14" cy="8.5" r="1.5" />
      </>
    ),
  },
];

function SideTools() {
  return (
    <aside className="flex w-[50px] shrink-0 flex-col items-center border-l border-[#c6c9cc] pl-[7px] pt-6 text-[#333]">
      <span className="h-[2px] w-[14px] bg-[#929497]" />
      <div className="mt-[22px] flex flex-col gap-[23px]">
        {sideTools.map((t) => (
          <button key={t.label} type="button" aria-label={t.label}>
            {t.art ? <Icon size={17}>{t.art}</Icon> : <History size={17} strokeWidth={1.5} />}
          </button>
        ))}
      </div>
    </aside>
  );
}

/* ---------- status bar ---------- */

function Divider() {
  return <span className="mx-[13px] h-[14px] w-px bg-[#c6c9cc]" />;
}

function StatusBar() {
  return (
    <footer className="flex h-[22px] shrink-0 items-center whitespace-nowrap border-t border-[#c5c8cb] text-xs">
      <span className="pl-[6px]">页面: 5/5</span>
      <Divider />
      <span>节: 1/1</span>
      <Divider />
      <span className="pr-2">列: 1</span>
      <Divider />
      <span>字数: 40/725</span>
      <Divider />
      <div className="flex items-center gap-4">
        <button type="button">改写: 关闭</button>
        <button type="button">修订: 关闭</button>
        <button type="button" className="flex items-center gap-[6px]">
          拼写检查: 打开
          <Chevron />
        </button>
      </div>
      <span className="ml-[15px] mr-3 h-[14px] w-px bg-[#c6c9cc]" />
      <button type="button">校对</button>
      <div className="ml-auto flex items-center pr-[9px]">
        <button type="button" aria-label="护眼">
          <Eye size={16} strokeWidth={1.5} />
        </button>
        <span className="ml-3 mr-2 h-[14px] w-px bg-[#c6c9cc]" />
        <button type="button" aria-label="页面视图" className="flex h-[21px] w-6 items-center justify-center rounded-sm bg-[#cecfd4]">
          <Icon size={14}>
            <path d="M1.5 1.5H12.5V12.5H1.5ZM4 5.5H10M4 8.5H8" />
          </Icon>
        </button>
        <button type="button" aria-label="大纲" className="ml-3">
          <Icon>
            <path d="M1 2.5H3M5 2.5H14M3 6.5H5M7 6.5H14M3 10.5H5M7 10.5H14M3 13.5H5M7 13.5H14" />
          </Icon>
        </button>
        <button type="button" aria-label="阅读" className="ml-[17px]">
          <Icon>
            <path d="M3 2.5 13.5 8 3 13.5Z" />
          </Icon>
        </button>
        <button type="button" aria-label="网页" className="ml-[15px]">
          <Globe size={16} strokeWidth={1.5} />
        </button>
        <button type="button" aria-label="写作" className="ml-4">
          <Icon>
            <path d="M6 8.5 11 2.5Q13 1 14 2Q15 3 13.5 5L8.5 10.5M6 8.5 8.5 10.5Q7 14.5 2 14Q4 12 3.5 10Q4.5 8 6 8.5Z" />
          </Icon>
        </button>
        <Divider />
        <button type="button" aria-label="适应">
          <Icon>
            <path d="M1.5 5V2.5H4M12 2.5H14.5V5M14.5 11V13.5H12M4 13.5H1.5V11M4.5 4.5H11.5V11.5H4.5Z" />
          </Icon>
        </button>
        <button type="button" className="ml-[22px] flex items-center gap-4">
          80%
          <Chevron />
        </button>
        <button type="button" aria-label="缩小" className="ml-[17px]">
          <Icon size={14}>
            <path d="M1 7H13" strokeWidth="2" />
          </Icon>
        </button>
        <input
          type="range"
          aria-label="缩放"
          min={0}
          max={100}
          defaultValue={39}
          className="ml-3 h-[2px] w-[106px] appearance-none bg-linear-to-r from-[#2353e0] from-40% to-[#bcbdc2] to-40% [&::-webkit-slider-thumb]:h-[10px] [&::-webkit-slider-thumb]:w-[10px] [&::-webkit-slider-thumb]:appearance-none [&::-webkit-slider-thumb]:rounded-full [&::-webkit-slider-thumb]:border-[3px] [&::-webkit-slider-thumb]:border-white [&::-webkit-slider-thumb]:bg-[#777] [&::-webkit-slider-thumb]:shadow"
        />
        <button type="button" aria-label="放大" className="ml-[13px]">
          <Icon size={14}>
            <path d="M7 2V12M2 7H12" strokeWidth="2" />
          </Icon>
        </button>
        <button type="button" aria-label="全屏" className="ml-[17px]">
          <Icon>
            <path d="M1.5 6V2.5H5M10.5 2.5H14.5V6M14.5 10V13.5H11M5 13.5H1.5V10M10.5 6 14 2.5M5.5 10 2 13.5" />
          </Icon>
        </button>
      </div>
    </footer>
  );
}

/* ---------- floating items ---------- */

function InputMethodBar() {
  return (
    <div className="absolute bottom-[63px] right-[3px] flex h-[26px] w-[200px] items-center rounded-sm border border-[#a9c6e8] bg-white pl-[10px] text-[#0670dc]">
      <svg width="32" height="32" viewBox="0 0 32 32" className="absolute -left-[27px] -top-[5px]" aria-hidden="true">
        <rect x="2" y="2" width="28" height="28" rx="4" fill="#f2541b" transform="rotate(-9 16 16)" />
        <path d="M25 8Q8 6 8 12Q9 14.5 17 15Q26 16 24 20.5Q20 25.500 7 23" fill="none" stroke="#fff" strokeWidth="4" />
      </svg>
      <div className="flex items-center gap-2">
        <span className="w-4 text-center text-base font-bold leading-4">中</span>
        <Icon>
          <circle cx="4" cy="6" r="1.8" strokeWidth="1.5" />
          <path d="M9 8H13V11L10.5 14L11 11H9Z" fill="currentColor" stroke="none" />
        </Icon>
        <Icon>
          <rect x="5" y="0" width="6" height="9.5" rx="3" fill="currentColor" stroke="none" />
          <path d="M2.5 6.5Q3 12 8 12Q13 12 13.5 6.5M8 12V15M4.5 15H11.5" strokeWidth="1.6" />
        </Icon>
        <Icon>
          <rect x="1" y="2.5" width="14" height="11" rx="1" strokeWidth="1.6" />
          <path d="M3 5.5H13M3 8H13" strokeWidth="1.5" strokeDasharray="1.5 1" />
          <path d="M4.5 11H11.5" strokeWidth="1.5" />
        </Icon>
        <Icon>
          <path d="M5 1.5Q8 4 11 1.5L16 4.5 14 8.5 12 7.5V14.5H4V7.5L2 8.5 0 4.5Z" fill="currentColor" stroke="none" />
        </Icon>
        <Icon>
          <path d="M8 5V2" strokeWidth="2" />
          <rect x="0" y="4" width="16" height="10.5" rx="5" fill="currentColor" stroke="none" />
          <path d="M3 9.5H7M5 7.5V11.5" stroke="#fff" />
          <circle cx="11.5" cy="9.5" r="1.6" stroke="#fff" />
        </Icon>
        <Icon>
          <path d="M1.5 2H7.5V8H1.5ZM1.5 9H7.5V15H1.5ZM9 9H15V15H9Z" fill="currentColor" stroke="none" />
          <rect x="9.8" y="2.8" width="4.2" height="4.2" rx="1" strokeWidth="1.6" />
        </Icon>
        <Icon>
          <path d="M8 1 10 3.5 14 3 13.5 6.5 16 8.5 13.5 10.5 14 14 10 13.5 8 15.5 6 13.5 2 14 2.5 10.5 0 8.5 2.5 6.5 2 3 6 3.5Z" fill="currentColor" stroke="none" />
          <path d="M8 7V15M5.500 12Q4 8 7 6.500M10.500 12Q12 8 9 6.500" stroke="#fff" />
        </Icon>
      </div>
    </div>
  );
}

function SiteBadge() {
  return (
    <div className="pointer-events-none absolute bottom-[5px] right-[9px] flex items-start opacity-80">
      <svg width="46" height="42" viewBox="0 0 46 42" className="-mr-[2px]" aria-hidden="true">
        <path d="M44 2Q20 0 7 14Q-1 24 6 31Q8 17 24 10Q34 5 44 2Z" fill="#4c8fd6" />
        <path d="M8 33Q14 28 24 24Q20 20 16 22Q22 12 32 10Q40 14 38 22Q32 34 6 38Q20 34 28 27Q18 34 8 33Z" fill="#7cc243" />
        <path d="M17 21Q22 12 31 10Q26 16 27 22Q22 19 17 21Z" fill="#3b7fd0" />
        <path d="M6 39Q24 38 34 28Q26 38 12 40Z" fill="#f0b63c" />
      </svg>
      <div className="flex flex-col">
        <span className="text-[21px] font-bold leading-[26px] text-[#4d8fd6]">极光下载站</span>
        <a href="#" className="pointer-events-auto font-['Liberation_Sans'] text-base font-bold leading-5 text-[#68bf6c]">
          www.xz7.com
        </a>
      </div>
    </div>
  );
}

function PointerArrow() {
  return (
    <svg width="50" height="150" viewBox="780 60 50 150" className="pointer-events-none absolute left-[780px] top-[60px] drop-shadow-[3px_2px_2px_rgba(0,0,0,0.5)]" aria-hidden="true">
      <path d="M813.3 66 818 92.5 812 90 789.500 202 786.5 201.500 808 89.5 803 91Z" fill="#fb0505" stroke="#c80000" strokeWidth="0.6" />
    </svg>
  );
}

export default function App() {
  return (
    <div className="relative flex h-screen flex-col overflow-hidden bg-linear-to-r from-[#e6eaed] to-[#e5e6eb] font-['Noto_Sans','Noto_Sans_CJK_SC',sans-serif] text-[#222]">
      <TitleBar />
      <MenuBar />
      <Ribbon />
      <div className="flex min-h-0 flex-1">
        <SectionPane />
        <DocumentArea />
        <SideTools />
      </div>
      <StatusBar />
      <PointerArrow />
      <InputMethodBar />
      <SiteBadge />
    </div>
  );
}
